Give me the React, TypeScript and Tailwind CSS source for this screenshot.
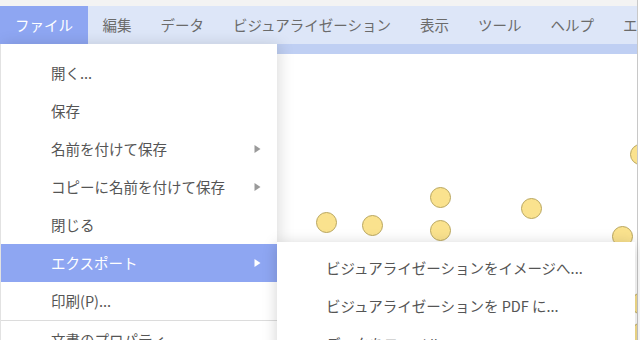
import React from "react";

const font = { fontFamily: '"Noto Sans CJK JP", "Noto Sans", sans-serif' };

const menubar = ["ファイル", "編集", "データ", "ビジュアライゼーション", "表示", "ツール", "ヘルプ", "エクスポート"];

const fileItems = [
  { label: "開く..." },
  { label: "保存" },
  { label: "名前を付けて保存", sub: true },
  { label: "コピーに名前を付けて保存", sub: true },
  { label: "閉じる" },
  { label: "エクスポート", sub: true, active: true },
  { label: "印刷(P)..." },
  { label: "文書のプロパティ", sep: true },
];

const exportItems = ["ビジュアライゼーションをイメージへ...", "ビジュアライゼーションを PDF に...", "データをファイルへ..."];

// centres, measured from the top of the canvas
const dots = [
  [326, 168],
  [372, 171],
  [440, 143],
  [440, 176],
  [531, 154],
  [622, 182],
  [640, 100],
  [640, 249],
  [640, 279],
];

function Arrow({ white }: { white?: boolean }) {
  return (
    <svg width="7" height="9" viewBox="0 0 7 9" className="absolute right-[16px] top-1/2 -translate-y-1/2">
      <path d="M0.5 0.5 L6.5 4.5 L0.5 8.5 Z" fill={white ? "#ffffff" : "#9a9a9a"} />
    </svg>
  );
}

export default function App() {
  return (
    <div className="w-[640px] h-[340px] overflow-hidden bg-white text-[14.5px]" style={font}>
      <div className="w-[638px] h-full border-r border-[#c8c8c8] flex flex-col">
        <div className="h-[6px] bg-[#f3f3f3] shrink-0" />
        <nav className="h-[38px] shrink-0 flex items-stretch bg-[#dde6f8] text-[#6b6b6b] overflow-hidden whitespace-nowrap">
          {menubar.map((m, i) => (
            <div
              key={m}
              className={
                i === 0
                  ? "flex items-center px-[15px] bg-[#8ea6f2] text-white"
                  : "flex items-center px-[14.5px]"
              }
            >
              {m}
            </div>
          ))}
        </nav>
        <div className="relative flex-1 flex flex-col">
          <div className="h-[10px] bg-[#bfcff3] shrink-0" />
          <div className="relative flex-1 overflow-hidden bg-white">
            {dots.map(([x, y], i) => (
              <div
                key={i}
                className="absolute w-[21px] h-[21px] rounded-full bg-[#fae28e] border border-[#b9a65e]"
                style={{ left: x - 10.5, top: y - 10.5 }}
              />
            ))}
          </div>

          <div className="absolute left-0 top-0 w-[277px] bg-white pt-[10px] border-l border-[#e2e2e2] shadow-[3px_0_14px_rgba(0,0,0,0.13)] text-[#555]">
            {fileItems.map((it) => (
              <div
                key={it.label}
                className={
                  (it.sep ? "border-t border-[#dcdcdc] " : "") +
                  (it.active ? "bg-[#8ea6f2] text-white " : "") +
                  "relative h-[38px] flex items-center pl-[50px] whitespace-nowrap"
                }
              >
                {it.label}
                {it.sub && <Arrow white={it.active} />}
              </div>
            ))}
          </div>

          <div className="absolute left-[277px] top-[198px] w-[358px] bg-white pt-[7px] shadow-[0_2px_14px_rgba(0,0,0,0.18)] text-[#555]">
            {exportItems.map((s) => (
              <div key={s} className="h-[38px] flex items-center pl-[49px] whitespace-nowrap">
                {s}
              </div>
            ))}
          </div>
        </div>
      </div>
    </div>
  );
}
